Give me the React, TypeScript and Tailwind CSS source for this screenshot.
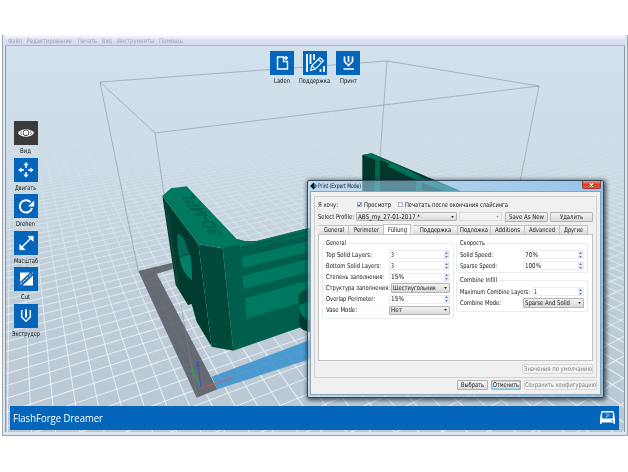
import { useLayoutEffect, useRef, useState, type ReactNode } from "react";

/* Text squeezed horizontally to a fixed width */
function Fit({ w, children, className = "" }: { w: number; children: string; className?: string }) {
  const ref = useRef<HTMLSpanElement>(null);
  const [scale, setScale] = useState(1);
  useLayoutEffect(() => {
    if (ref.current && ref.current.offsetWidth) {
      const natural = ref.current.getBoundingClientRect().width / scale;
      setScale(w / natural);
    }
  }, [w, children]);
  return (
    <span className={"block shrink-0 whitespace-nowrap " + className} style={{ width: w }}>
      <span ref={ref} className="inline-block origin-left" style={{ transform: `scaleX(${scale})` }}>
        {children}
      </span>
    </span>
  );
}

/* Perspective floor grid */
const A = [197, 397];
const VX = [1273, -4];
const VY = [12, -2];
const KU = 0.392;
const KV = 0.465;
function project(u: number, v: number) {
  const w = 1 + u * KU + v * KV;
  return [
    (A[0] + u * KU * VX[0] + v * KV * VY[0]) / w,
    (A[1] + u * KU * VX[1] + v * KV * VY[1]) / w,
  ];
}
function Grid() {
  const lines: number[][] = [];
  for (let k = -14; k < 110; k++) {
    const u = (k + 0.49) * 0.045;
    const v = (w: number) => (w - 1 - u * KU) / KV;
    lines.push([...project(u, v(0.8)), ...project(u, v(5))]);
  }
  for (let k = -45; k < 110; k++) {
    const v = (k + 0.5) * 0.071;
    const u = (w: number) => (w - 1 - v * KV) / KU;
    lines.push([...project(u(0.8), v), ...project(u(5), v)]);
  }
  return (
    <g mask="url(#fade)" stroke="#f4f8fa" strokeWidth="1.05" strokeOpacity="0.8">
      {lines.map(([a, b, c, d], i) => (
        <line key={i} x1={a} y1={b} x2={c} y2={d} />
      ))}
    </g>
  );
}

function Scene() {
  return (
    <svg className="block h-full w-full" viewBox="6 46 618 386" preserveAspectRatio="none">
      <defs>
        <linearGradient id="sky" x1="0" y1="0" x2="0" y2="1">
          <stop offset="0" stopColor="#d1e2ec" />
          <stop offset="0.25" stopColor="#cddde7" />
          <stop offset="0.6" stopColor="#bfced8" />
          <stop offset="1" stopColor="#b9c8d3" />
        </linearGradient>
        <linearGradient id="fadeg" gradientUnits="userSpaceOnUse" x1="0" y1="115" x2="0" y2="360">
          <stop offset="0" stopColor="#000" />
          <stop offset="0.2" stopColor="#2a2a2a" />
          <stop offset="0.5" stopColor="#888" />
          <stop offset="1" stopColor="#fff" />
        </linearGradient>
        <mask id="fade" maskUnits="userSpaceOnUse" x="0" y="0" width="628" height="472">
          <rect width="628" height="472" fill="url(#fadeg)" />
        </mask>
      </defs>
      <rect x="6" y="46" width="618" height="386" fill="url(#sky)" />
      <Grid />
      <path d="M138.3 271L172.7 262.7V269L156.7 273.7L217.3 389.3L196.7 397.7Z" fill="#55595f" fillOpacity="0.85" />
      <path d="M211.7 376.7L310 340V359L217.3 389.3Z" fill="#3a93cf" fillOpacity="0.88" />
      <g fill="none" stroke="#7b8790" strokeWidth="0.55" strokeOpacity="0.9">
        <path d="M155 133L100 82L387 61L539 86ZM100 82L138 270M539 86L520 182M387 61L380 157" />
        <path d="M155 133L170 235M181 305L197 397" />
      </g>
      {/* printed part, left block */}
      <g transform="translate(130 170) scale(0.3333)">
        <path d="M278 235L320 207L345 214L380 213L560 168V466L508 473L310 542Z" fill="#005f4c" />
        <path d="M320 207L345 214H380L560 168V188L332 241L326 222Z" fill="#00725b" />
        <path d="M333 231L560 174V182L334 240Z" fill="#005f4c" />
        <path d="M335 262L560 207V240L338 295ZM338 318L560 260V300L341 357ZM345 385L560 325V385L505 400L350 446Z" fill="#007960" />
        <path d="M97 78L205 222L245 530L200 455L185 402L174 405L137 345Z" fill="#003b30" />
        <path d="M205 222L278 235L310 542L245 530Z" fill="#00493b" />
        <path d="M97 78L123 55L170 49L320 207L330 221L278 235L205 222Z" fill="#017960" />
        <path d="M104 88L142 352M110 96L147 355" stroke="#2c5a50" strokeWidth="1.2" fill="none" />
        <path d="M142 193C158 186 182 235 186 330C166 322 138 268 142 193Z" fill="#046b56" />
        <path d="M148 262L180 250C185 275 186 305 186 330C170 322 155 298 148 262Z" fill="#027f66" />
        <path d="M148 262L180 251" stroke="#004436" strokeWidth="3" fill="none" />
        <path d="M508 405C500 380 505 362 545 352V400Z" fill="#004c3d" />
        <path d="M508 410C512 440 530 452 560 455V490C525 485 510 478 508 465Z" fill="#003b30" />
        <path d="M508 410C512 398 535 394 560 398V455C525 450 510 440 508 410Z" fill="#007960" />
        <text
          transform="matrix(-0.6 -0.8 0.96 -0.05 278 194)"
          fontFamily="Liberation Sans, sans-serif"
          fontSize="56"
          textLength="156"
          lengthAdjust="spacingAndGlyphs"
          fill="#016c55"
          stroke="#004f3f"
          strokeWidth="1.5"
        >
          3D-MPL
        </text>
        <g fill="none" strokeWidth="2.6">
          <path d="M214 655L300 625M296 618L305 628" stroke="#f04a50" />
          <path d="M214 655L187 600M183 606L188 597L194 602" stroke="#16c53c" />
          <path d="M213 653L205 590M198 577H207L200 587H208" stroke="#3f43d8" />
        </g>
      </g>
      {/* printed part, back wall */}
      <g transform="translate(300 140) scale(0.3333)">
        <path d="M187 45L215 40L480 152V160H187Z" fill="#00382c" />
        <path d="M187 45L215 40L330 92L365 112L480 152L478 160H452L350 122L318 105L262 78L268 72L240 60L228 59Z" fill="#007059" />
        <path d="M226 58L240 60V160H223ZM350 118L366 122V160H347Z" fill="#006650" />
      </g>
    </svg>
  );
}

const stroke = { fill: "none", stroke: "#fff" } as const;
const icons: Record<string, ReactNode> = {
  eye: (
    <>
      <path d="M4 12C7 7 17 7 20 12C17 17 7 17 4 12Z" fill="#fff" />
      <circle cx="12" cy="11.8" r="2.9" fill="none" stroke="#3b3b3b" strokeWidth="0.9" />
      <path d="M6.600 12C6.900 11.100 7.400 10.400 8 10M17.400 12C17.100 11.100 16.600 10.400 16 10M6.600 12C6.900 12.900 7.400 13.600 8 14M17.400 12C17.100 12.900 16.600 13.600 16 14" fill="none" stroke="#3b3b3b" strokeWidth="0.600" />
    </>
  ),
  move: (
    <>
      <path d="M12 6V10M12 14V18.500M6 12H10M14 12H18" {...stroke} strokeWidth="1.5" />
      <path d="M12 4L14.600 7.300H9.400ZM12 19.800L14.600 16.500H9.400ZM4.300 12L7.600 9.400V14.600ZM19.700 12L16.400 9.400V14.600Z" fill="#fff" />
    </>
  ),
  rotate: (
    <>
      <path d="M16.600 8.200A6.200 6.200 0 1 0 18 14" {...stroke} strokeWidth="2" />
      <path d="M20.200 6.500V12.500H14Z" fill="#fff" />
    </>
  ),
  scale: (
    <>
      <path d="M7.500 16.500L17 7" {...stroke} strokeWidth="1.500" />
      <path d="M13.800 5.200H19.300V10.400ZM5.700 13.300V18.800H11.200Z" fill="#fff" stroke="#fff" strokeWidth="0.5" />
    </>
  ),
  cut: (
    <>
      <path d="M6 5.500H16L6 15ZM19 8.500V18.500H8.500Z" fill="#fff" />
      <path d="M6.200 17.300L18.800 5.800" {...stroke} strokeWidth="1" strokeDasharray="3 1" />
    </>
  ),
  nozzle: (
    <>
      <path d="M7.700 6V13L12 17.300L16.300 13V6" {...stroke} strokeWidth="1.500" />
      <path d="M12 5.200V13.500" {...stroke} strokeWidth="2" />
    </>
  ),
  load: (
    <path d="M13.500 6H7.500V18H17.500V10.500H13.500ZM16 5V9M14.200 7H18" {...stroke} strokeWidth="1.400" />
  ),
  support: (
    <>
      <path d="M4 3V21M7.500 3V13M11 3V9M17.500 18V21M21 15V21" {...stroke} strokeWidth="1.800" />
      <path d="M7.500 19.500L8.800 14.800L17 6.500L20.500 9.800L12.300 18ZM8.800 14.800L12.300 18M15.200 8.300L18.700 11.500" {...stroke} strokeWidth="1.100" />
    </>
  ),
  print: (
    <path d="M8.500 5.500V10.500L12.500 14.500L16.500 10.500V5.500M12.500 5V11M7.500 18H18" {...stroke} strokeWidth="1.700" />
  ),
};

function Tool({ icon, label, w, dark = false }: { icon: string; label: string; w: number; dark?: boolean }) {
  return (
    <div className="flex w-[24px] flex-col items-center">
      <div className={"size-[24px] shrink-0 " + (dark ? "bg-[#3b3b3b]" : "bg-[#0366ba]")}>
        <svg viewBox="0 0 24 24" className="size-full">{icons[icon]}</svg>
      </div>
      <Fit w={w} className="mt-[2px] text-[6.6px] leading-[8px] text-[#111]">{label}</Fit>
    </div>
  );
}

function Button({ label, w, className = "" }: { label: string; w: number; className?: string }) {
  return (
    <div className={"flex h-[10px] shrink-0 items-center justify-center rounded-[1px] border border-[#b0b0b0] bg-linear-to-b from-[#f4f4f4] to-[#dcdcdc] " + className}>
      <Fit w={w}>{label}</Fit>
    </div>
  );
}

function Combo({ label, w, className }: { label: string; w: number; className: string }) {
  return (
    <div className={"flex h-[9.5px] shrink-0 items-center justify-between rounded-[1px] border border-[#b4b4b4] bg-linear-to-b from-[#f3f3f3] to-[#d9d9d9] pr-[2px] pl-[1px] " + className}>
      <Fit w={w}>{label}</Fit>
      <svg viewBox="0 0 4 3" className="h-[2px] w-[3px]"><path d="M0 0H4L2 3Z" fill="#222" /></svg>
    </div>
  );
}

function Spin({ value, w, className }: { value: string; w: number; className: string }) {
  return (
    <div className={"flex h-[9px] shrink-0 items-center justify-between border border-[#eceef1] bg-white pl-[1px] " + className}>
      <Fit w={w}>{value}</Fit>
      <svg viewBox="0 0 5 8" className="h-[8px] w-[5px] bg-[#e4e8f1]">
        <path d="M1.300 3L2.500 1.300L3.700 3ZM1.300 5L2.500 6.700L3.700 5Z" fill="#4e62a0" />
        <path d="M0 4H5" stroke="#fff" strokeWidth="0.5" />
      </svg>
    </div>
  );
}

function Row({ label, w, children }: { label: string; w: number; children: ReactNode }) {
  return (
    <div className="flex h-[11.15px] items-center justify-between">
      <Fit w={w}>{label}</Fit>
      {children}
    </div>
  );
}

function Group({ title, w, className, children }: { title: string; w: number; className: string; children: ReactNode }) {
  return (
    <fieldset className={"rounded-[2px] border border-[#e6eef2] pr-[3px] pl-[3px] " + className}>
      <legend className="-ml-px h-[8px] px-[1px]"><Fit w={w}>{title}</Fit></legend>
      {children}
    </fieldset>
  );
}

const tabs: [string, number, string][] = [
  ["General", 20, "w-[30px]"],
  ["Perimeter", 25, "w-[35px]"],
  ["Füllung", 19, "w-[28px]"],
  ["Поддержка", 31, "w-[45px]"],
  ["Подложка", 28, "w-[33px]"],
  ["Additions", 25, "w-[34px]"],
  ["Advanced", 26, "w-[35px]"],
  ["Другие", 19, "w-[28px]"],
];

function Dialog() {
  return (
    <div className="absolute top-[180px] left-[307px] flex h-[218px] w-[297px] flex-col rounded-[2px] border border-[#39495a] bg-linear-to-r from-[#b6dcf5]/55 to-[#72b4ec]/60 px-[2px] pb-[2px] text-[6.6px] leading-[8px] text-[#151515] shadow-[1px_1px_4px_1px_rgba(20,30,40,0.75)]">
      <div className="flex h-[10px] shrink-0 items-start justify-between">
        <div className="flex items-center pt-[1px]">
          <svg viewBox="0 0 8 8" className="h-[8px] w-[7px]">
            <path d="M4 0L8 4L4 8L0 4Z" fill="#0b1c2c" />
            <path d="M4.500 1.500L7.800 4L5 5.500Z" fill="#28a3df" />
          </svg>
          <Fit w={43} className="ml-[1px] text-[6.2px]">Print (Expert Mode)</Fit>
        </div>
        <div className="flex h-[8px] w-[19px] items-center justify-center rounded-b-[2px] border border-t-0 border-[#9c3a30] bg-linear-to-b from-[#e99784] via-[#d2412c] to-[#d9573c]">
          <svg viewBox="0 0 6 5" className="h-[4px] w-[5px]"><path d="M1 0.500L5 4.500M5 0.500L1 4.500" stroke="#fff" strokeWidth="1.300" /></svg>
        </div>
      </div>
      <div className="flex min-h-0 flex-1 flex-col border border-[#8fa3b3] bg-[#f0f0f0] px-[3px] pt-[4px]">
        <div className="flex h-[182px] shrink-0 flex-col border border-[#d2d2d2] px-[3px] pt-[2px]">
          <div className="flex h-[11px] shrink-0 items-center">
            <Fit w={20}>Я хочу:</Fit>
            <div className="ml-[19px] flex size-[5px] items-center justify-center border border-[#a9b3c0] bg-white">
              <svg viewBox="0 0 5 5" className="size-[5px] shrink-0"><path d="M0.800 2.500L2 4L4.300 0.800" fill="none" stroke="#31479b" strokeWidth="1" /></svg>
            </div>
            <Fit w={27} className="ml-[2px]">Просмотр</Fit>
            <div className="ml-[7px] size-[5px] border border-[#a9b3c0] bg-white" />
            <Fit w={103} className="ml-[2px]">Печатать после окончания слайсинга</Fit>
          </div>
          <div className="mt-[1px] flex h-[11px] shrink-0 items-center">
            <Fit w={36}>Select Profile:</Fit>
            <Combo w={62} label="ABS_my_27-01-2017 *" className="ml-[2px] w-[101px]" />
            <div className="ml-[2px] flex h-[9.5px] w-[43px] items-center justify-end border border-[#dadada] bg-[#f2f2f2] pr-[2px]">
              <svg viewBox="0 0 4 3" className="h-[2px] w-[3px]"><path d="M0 0H4L2 3Z" fill="#aaa" /></svg>
            </div>
            <Button w={35} label="Save As New" className="ml-[3px] w-[43px]" />
            <Button w={23} label="Удалить" className="ml-[2px] w-[43px]" />
          </div>
          <div className="mt-[2px] flex h-[10px] shrink-0 items-end">
            {tabs.map(([t, w, cw]) => (
              <div
                key={t}
                className={
                  "flex shrink-0 items-center justify-center border border-b-0 border-[#c3c3c3] " + cw + " " +
                  (t === "Füllung" ? "mr-[1px] h-[10px] bg-white" : "-mr-px ml-[1px] h-[9px] border-l-0 bg-linear-to-b from-[#f3f3f3] to-[#dedede]")
                }
              >
                <Fit w={w}>{t}</Fit>
              </div>
            ))}
          </div>
          <div className="flex h-[127px] w-[275px] shrink-0 items-start gap-[2px] border border-[#bfc3c8] bg-white px-[3px] pt-[4px]">
            <Group title="General" w={20} className="h-[80px] w-[132px]">
              <div className="pt-[2.200px]">
                <Row label="Top Solid Layers:" w={46}><Spin value="3" w={3} className="w-[61px]" /></Row>
                <Row label="Bottom Solid Layers:" w={55}><Spin value="3" w={3} className="w-[61px]" /></Row>
                <Row label="Степень заполнения:" w={58}><Spin value="15%" w={13} className="w-[61px]" /></Row>
                <Row label="Структура заполнения:" w={64}><Combo label="Шестиугольник" w={43} className="w-[59px]" /></Row>
                <Row label="Overlap Perimeter:" w={49}><Spin value="15%" w={13} className="w-[61px]" /></Row>
                <Row label="Vase Mode:" w={31}><Combo label="Нет" w={11} className="w-[61px]" /></Row>
              </div>
            </Group>
            <div className="flex flex-col">
              <Group title="Скорость" w={25} className="h-[34px] w-[132px]">
                <div className="pt-[2.200px]">
                  <Row label="Solid Speed:" w={33}><Spin value="70%" w={13} className="w-[61px]" /></Row>
                  <Row label="Sparse Speed:" w={37}><Spin value="100%" w={16} className="w-[61px]" /></Row>
                </div>
              </Group>
              <Group title="Combine Infill" w={37} className="mt-[3px] h-[36px] w-[132px]">
                <div className="pt-[2.200px]">
                  <Row label="Maximum Combine Layers:" w={70}><Spin value="1" w={3} className="w-[52px]" /></Row>
                  <Row label="Combine Mode:" w={41}><Combo label="Sparse And Solid" w={45} className="w-[61px]" /></Row>
                </div>
              </Group>
            </div>
          </div>
          <div className="mt-[3px] flex w-[275px] justify-end">
            <Button w={68} label="Значения по умолчанию" className="w-[71px] border-[#d5d9d9] from-[#f4f4f4] to-[#f2f2f2] text-[#828282]" />
          </div>
        </div>
        <div className="mt-[2px] flex justify-end gap-[3px]">
          <Button w={23} label="Выбрать" className="w-[31px]" />
          <Button w={26} label="Отменить" className="w-[30px] border-[#2fa6d3] from-[#eef6fa] to-[#d6e8f0] shadow-[inset_0_0_0_0.5px_#59cdf0]" />
          <Button w={71} label="Сохранить конфигурацию" className="w-[73px] border-[#d5d9d9] from-[#f4f4f4] to-[#f2f2f2] text-[#828282]" />
        </div>
      </div>
    </div>
  );
}

export default function App() {
  return (
    <div className="relative h-[472px] w-[628px] overflow-hidden bg-white pt-[35px] font-['DejaVu_Sans_Condensed','DejaVu_Sans',sans-serif]">
      <div className="ml-[2px] flex h-[401px] w-[626px] flex-col border-x border-b border-[#9aa5b0] bg-[#dde6f0] px-[2px] pb-[3px]">
        <div className="flex h-[11px] shrink-0 items-center gap-[5.300px] border-b border-[#aab7c8] bg-linear-to-b from-[#fafbff] via-[#dbe1f3] to-[#d0daee] pt-[2px] pl-[3px] text-[6.2px] leading-[8px] text-[#9da1b3]">
          <Fit w={14}>Файл</Fit>
          <Fit w={45}>Редактирование</Fit>
          <Fit w={19}>Печать</Fit>
          <Fit w={10}>Вид</Fit>
          <Fit w={37}>Инструменты</Fit>
          <Fit w={24}>Помощь</Fit>
        </div>
        <div className="grid min-h-0 flex-1 border border-t-0 border-[#8d99a5]">
          <div className="col-start-1 row-start-1 h-[386px] min-h-0 overflow-hidden">
            <Scene />
          </div>
          <div className="z-10 col-start-1 row-start-1 flex h-[386px] flex-col justify-between pr-[5px] pb-[2.500px] pl-[4px]">
            <div>
              <div className="flex h-[75px] gap-[9.300px] pt-[5px] pl-[259.500px]">
                <Tool icon="load" label="Laden" w={16} />
                <Tool icon="support" label="Поддержка" w={31} />
                <Tool icon="print" label="Принт" w={17} />
              </div>
              <div className="flex flex-col gap-[2.600px] pl-[3.700px]">
                <Tool icon="eye" label="Вид" w={11} dark />
                <Tool icon="move" label="Двигать" w={21} />
                <Tool icon="rotate" label="Drehen" w={19} />
                <Tool icon="scale" label="Масштаб" w={24} />
                <Tool icon="cut" label="Cut" w={9} />
                <Tool icon="nozzle" label="Экструдер" w={28} />
              </div>
            </div>
            <div className="flex h-[24px] shrink-0 items-center justify-between bg-[#0366ba] pr-[4px] pl-[3px] font-['Open_Sans','Noto_Sans',sans-serif] text-[10.5px] leading-[14px] text-white">
              <Fit w={90}>FlashForge Dreamer</Fit>
              <svg viewBox="0 0 15 13" className="h-[13px] w-[15px]">
                <path d="M2 0H13L14 1.500L15 8.500V13H13.500V11.500H1.500V13H0V8.500L1 1.500Z" fill="#fff" />
                <path d="M2.200 1.500H12.800V7.500H2.200Z" fill="#0366ba" />
                <path d="M5.500 6.500L9 2.500M7 6.500L9.800 3.500M5.500 3H7.500" stroke="#9cc6ec" strokeWidth="0.900" />
                <circle cx="12.300" cy="9.700" r="0.700" fill="#0366ba" />
              </svg>
            </div>
          </div>
        </div>
      </div>
      <Dialog />
    </div>
  );
}
